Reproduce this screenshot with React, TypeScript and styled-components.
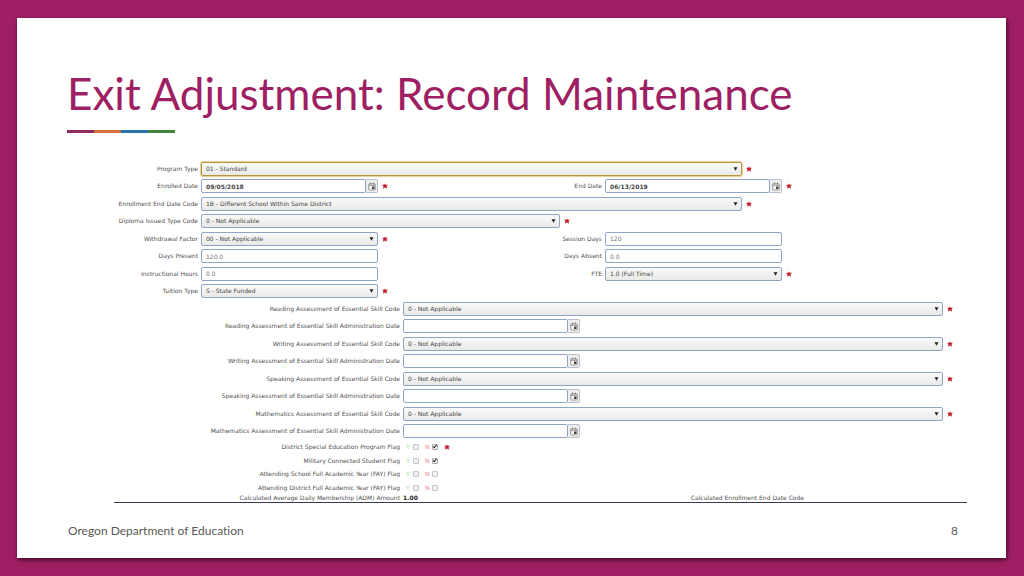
import React, { useId } from 'react';
import styled, { createGlobalStyle } from 'styled-components';

const GlobalStyle = createGlobalStyle`
  *, *::before, *::after { box-sizing: border-box; }
  body {
    margin: 0;
    background: #9e1f63;
    font-family: Lato, "Liberation Sans", sans-serif;
    font-variant-ligatures: none;
  }
`;

const Page = styled.div`
  min-height: 100vh;
  padding: 18px 18px 18px 17px;
  display: flex;
`;

const Slide = styled.main`
  flex: 1;
  min-width: 0;
  display: flex;
  flex-direction: column;
  padding: 48px 39px 17px 50px;
  background: #fff;
  box-shadow: 1px 2px 4px rgba(30, 0, 20, 0.75);
`;

const Title = styled.h1`
  margin: 0;
  color: #9e1f63;
  font-size: 44px;
  font-weight: 400;
  line-height: 54px;
  white-space: nowrap;
`;

const Accent = styled.div`
  display: flex;
  margin-top: 10px;
`;

const AccentPiece = styled.span<{ $color: string }>`
  width: 27px;
  height: 3px;
  background: ${(p) => p.$color};
`;

const Form = styled.form`
  margin: 27px 0 0 47px;
  border-bottom: 1px solid #3a3a4c;
  color: #505050;
  font-family: "DejaVu Sans", Verdana, sans-serif;
  font-size: 6px;
  line-height: 8px;
`;

const Row = styled.div<{ $columns: string }>`
  display: grid;
  grid-template-columns: ${(p) => p.$columns};
  align-items: center;
  height: 17px;
  &:nth-child(even) { height: 18px; }
`;

const FlagRow = styled.div`
  display: grid;
  grid-template-columns: 289fr 564fr;
  align-items: center;
  height: 14px;
  &:nth-child(even) { height: 13px; }
`;

const TotalRow = styled.div`
  display: grid;
  grid-template-columns: 289fr 287fr 117fr 160fr;
  height: 8px;
`;

const Label = styled.label`
  padding-right: 3px;
  text-align: right;
  white-space: nowrap;
  justify-self: end;
`;

const Total = styled.output`
  color: #222;
  font-weight: 700;
`;

const ControlCell = styled.div`
  position: relative;
  display: flex;
  min-width: 0;
  height: 14px;
`;

const Select = styled.select<{ $focused?: boolean }>`
  appearance: none;
  width: 100%;
  height: 14px;
  padding: 0 14px 0 4px;
  border: 1px solid ${(p) => (p.$focused ? '#b8963e' : '#8ea5c6')};
  border-radius: 2px;
  background: linear-gradient(#fafafa, #e9e9e7);
  box-shadow: ${(p) => (p.$focused ? '0 0 1px 1px #e3cf98' : 'none')};
  color: #444;
  font: inherit;
`;

const Arrow = styled.svg`
  position: absolute;
  right: 4px;
  top: 5px;
  width: 5px;
  height: 4px;
  pointer-events: none;
`;

const Input = styled.input<{ $bold?: boolean }>`
  flex: 1;
  min-width: 0;
  height: 14px;
  padding: 0 4px;
  border: 1px solid #8ea5c6;
  border-radius: 2px;
  background: #fff;
  color: ${(p) => (p.$bold ? '#444' : '#777')};
  font: inherit;
  font-weight: ${(p) => (p.$bold ? 700 : 400)};
`;

const CalendarButton = styled.button`
  display: flex;
  align-items: center;
  justify-content: center;
  width: 12px;
  height: 14px;
  padding: 0;
  border: 1px solid #b4bfd0;
  border-left: 0;
  border-radius: 0 2px 2px 0;
  background: #eeeeec;
`;

const StarCell = styled.div`
  display: flex;
  padding-left: 4px;
`;

const StarIcon = styled.svg`
  width: 6px;
  height: 6px;
`;

const FlagOptions = styled.div`
  display: flex;
  align-items: center;
  padding-left: 3px;
`;

const FlagOption = styled.label<{ $color: string }>`
  display: flex;
  align-items: center;
  justify-content: space-between;
  width: 13px;
  margin-right: 6px;
  color: ${(p) => p.$color};
`;

const Check = styled.input`
  appearance: none;
  position: relative;
  width: 6px;
  height: 6px;
  margin: 0;
  border: 1px solid #c6c6c6;
  border-radius: 1px;
  background: #f1f1f1;
  &:checked { border-color: #aaa; }
  &:checked::after {
    content: "";
    position: absolute;
    left: 1px;
    top: -1px;
    width: 2px;
    height: 4px;
    border: solid #222;
    border-width: 0 1px 1px 0;
    transform: rotate(40deg);
  }
`;

const Footer = styled.footer`
  display: flex;
  justify-content: space-between;
  margin-top: auto;
  padding: 0 9px 0 1px;
  color: #595959;
  font-size: 12px;
  line-height: 20px;
`;

function Star() {
  return (
    <StarIcon viewBox="0 0 12 12" role="img" aria-label="required">
      <path
        d="M6 0.5 7.4 3.7 11.7 3.6 9 7 10.4 11.5 6 9 1.6 11.5 3 7 0.3 3.6 4.6 3.7Z"
        fill="#c0202a"
      />
    </StarIcon>
  );
}

function CalendarIcon() {
  return (
    <svg width="8" height="9" viewBox="0 0 16 18" aria-hidden="true">
      <rect x="1.5" y="3.5" width="13" height="12.5" rx="1.5" fill="#f8f8f8" stroke="#808080" strokeWidth="1.6" />
      <path d="M1.5 6.5H14.5M5 1V5M11 1V5" stroke="#808080" strokeWidth="1.8" />
      <rect x="8" y="9" width="5" height="5" fill="#444" />
    </svg>
  );
}

type FieldProps = {
  label: string;
  value?: string;
  kind?: 'select' | 'date' | 'text';
  required?: boolean;
  focused?: boolean;
};

function Field({ label, value = '', kind = 'select', required, focused }: FieldProps) {
  const id = useId();
  return (
    <>
      <Label htmlFor={id}>{label}</Label>
      <ControlCell>
        {kind === 'select' ? (
          <>
            <Select id={id} $focused={focused} defaultValue={value}>
              <option>{value}</option>
            </Select>
            <Arrow viewBox="0 0 10 8" aria-hidden="true">
              <path d="M1 0.5H9L5 7.5Z" fill="#222" />
            </Arrow>
          </>
        ) : (
          <Input id={id} type="text" defaultValue={value} $bold={kind === 'date'} />
        )}
        {kind === 'date' && (
          <CalendarButton type="button" aria-label={`Choose ${label}`}>
            <CalendarIcon />
          </CalendarButton>
        )}
      </ControlCell>
      <StarCell>{required && <Star />}</StarCell>
    </>
  );
}

const WIDE = '87fr 541fr 225fr';
const MEDIUM = '87fr 359fr 407fr';
const SINGLE = '87fr 177fr 589fr';
const PAIR = '87fr 177fr 50fr 177fr 177fr 185fr';
const SKILL_CODE = '289fr 540fr 24fr';
const SKILL_DATE = '289fr 177fr 387fr';

const skills = ['Reading', 'Writing', 'Speaking', 'Mathematics'];

const flags = [
  { label: 'District Special Education Program Flag', no: true, required: true },
  { label: 'Military Connected Student Flag', no: true },
  { label: 'Attending School Full Academic Year (FAY) Flag' },
  { label: 'Attending District Full Academic Year (FAY) Flag' },
];

export default function App() {
  return (
    <Page>
      <GlobalStyle />
      <Slide>
        <Title>Exit Adjustment: Record Maintenance</Title>
        <Accent>
          {['#952a63', '#d2703a', '#2a72ae', '#43853f'].map((c) => (
            <AccentPiece key={c} $color={c} />
          ))}
        </Accent>
        <Form>
          <div>
            <Row $columns={WIDE}>
              <Field label="Program Type" value="01 - Standard" required focused />
            </Row>
            <Row $columns={PAIR}>
              <Field label="Enrolled Date" value="09/05/2018" kind="date" required />
              <Field label="End Date" value="06/13/2019" kind="date" required />
            </Row>
            <Row $columns={WIDE}>
              <Field label="Enrollment End Date Code" value="1B - Different School Within Same District" required />
            </Row>
            <Row $columns={MEDIUM}>
              <Field label="Diploma Issued Type Code" value="0 - Not Applicable" required />
            </Row>
            <Row $columns={PAIR}>
              <Field label="Withdrawal Factor" value="00 - Not Applicable" required />
              <Field label="Session Days" value="120" kind="text" />
            </Row>
            <Row $columns={PAIR}>
              <Field label="Days Present" value="120.0" kind="text" />
              <Field label="Days Absent" value="0.0" kind="text" />
            </Row>
            <Row $columns={PAIR}>
              <Field label="Instructional Hours" value="0.0" kind="text" />
              <Field label="FTE" value="1.0 (Full Time)" required />
            </Row>
            <Row $columns={SINGLE}>
              <Field label="Tuition Type" value="S - State Funded" required />
            </Row>
            {skills.map((skill) => (
              <React.Fragment key={skill}>
                <Row $columns={SKILL_CODE}>
                  <Field label={`${skill} Assessment of Essential Skill Code`} value="0 - Not Applicable" required />
                </Row>
                <Row $columns={SKILL_DATE}>
                  <Field label={`${skill} Assessment of Essential Skill Administration Date`} kind="date" />
                </Row>
              </React.Fragment>
            ))}
          </div>
          <div>
            {flags.map((flag) => (
              <FlagRow key={flag.label} role="group" aria-label={flag.label}>
                <Label as="span">{flag.label}</Label>
                <FlagOptions>
                  <FlagOption $color="#8fdc9a">
                    Y
                    <Check type="checkbox" />
                  </FlagOption>
                  <FlagOption $color="#f0808c">
                    N
                    <Check type="checkbox" defaultChecked={flag.no} />
                  </FlagOption>
                  {flag.required && <Star />}
                </FlagOptions>
              </FlagRow>
            ))}
          </div>
          <TotalRow>
            <Label htmlFor="adm">Calculated Average Daily Membership (ADM) Amount</Label>
            <Total id="adm">1.00</Total>
            <Label as="span">Calculated Enrollment End Date Code</Label>
          </TotalRow>
        </Form>
        <Footer>
          <span>Oregon Department of Education</span>
          <span>8</span>
        </Footer>
      </Slide>
    </Page>
  );
}
